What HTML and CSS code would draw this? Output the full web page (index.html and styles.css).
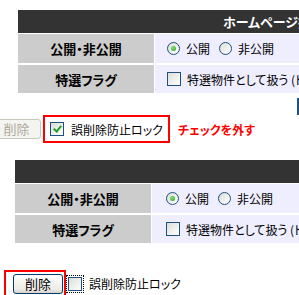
FILE: index.html
```html
<!DOCTYPE html>
<html lang="ja">
<head>
    <meta charset="UTF-8">
    <title>削除ロック</title>
    <link rel="stylesheet" href="styles.css">
</head>
<body>
    <!-- Before: lock is on -->
    <div class="form-table first">
        <div class="head"><span>ホームページ掲載</span></div>
        <div class="row">
            <div class="label">公開・非公開</div>
            <div class="value">
                <span class="radio on"></span><span class="opt">公開</span>
                <span class="radio"></span><span class="opt">非公開</span>
            </div>
        </div>
        <div class="row">
            <div class="label">特選フラグ</div>
            <div class="value">
                <span class="check"></span><span class="opt">特選物件として扱う (トップページに表示)</span>
            </div>
        </div>
    </div>
    <div class="edge-mark"></div>

    <div class="action-row first-actions">
        <button class="btn" disabled>削除</button>
        <div class="highlight lock-box">
            <span class="check checked"></span><span class="lock-text">誤削除防止ロック</span>
        </div>
        <span class="note">チェックを外す</span>
    </div>

    <!-- After: lock is off -->
    <div class="form-table second">
        <div class="head"></div>
        <div class="row">
            <div class="label">公開・非公開</div>
            <div class="value">
                <span class="radio on"></span><span class="opt">公開</span>
                <span class="radio"></span><span class="opt">非公開</span>
            </div>
        </div>
        <div class="row">
            <div class="label">特選フラグ</div>
            <div class="value">
                <span class="check"></span><span class="opt">特選物件として扱う (トップページに表示)</span>
            </div>
        </div>
    </div>

    <div class="action-row second-actions">
        <div class="highlight btn-box">
            <button class="btn">削除</button>
        </div>
        <span class="check focus"></span><span class="lock-text">誤削除防止ロック</span>
    </div>
</body>
</html>
```

FILE: styles.css
```css
/* General */
body {
    margin: 0;
    background: #fff;
    color: #000;
    font-family: "Noto Sans CJK JP", sans-serif;
    font-size: 12px;
    font-feature-settings: "palt";
    overflow: hidden;
    width: 299px;
    height: 295px;
    position: relative;
}

/* Form tables */
.form-table {
    width: 420px;
}

.form-table.first {
    margin: 10px 0 0 18px;
}

.form-table.second {
    margin: 17px 0 0 15px;
}

.head {
    height: 23px;
    background: #333;
    color: #fff;
    font-weight: bold;
    font-size: 13px;
    line-height: 23px;
    padding-left: 205px;
    white-space: nowrap;
}

.row {
    display: flex;
    height: 29px;
    border-top: 1px solid #fff;
}

.row + .row {
    border-top-width: 2px;
    height: 28px;
}

.label {
    width: 136px;
    background: #ccc;
    font-weight: bold;
    font-size: 13px;
    display: flex;
    align-items: center;
    justify-content: center;
}

.value {
    flex: 1;
    margin-left: 1px;
    background: #eef;
    display: flex;
    align-items: center;
    padding-left: 12px;
    white-space: nowrap;
    overflow: hidden;
}

.second .value {
    padding-left: 14px;
}

.opt {
    font-size: 12px;
    margin: 0 9px 0 6px;
}

/* Radio and checkbox look */
.radio {
    width: 11px;
    height: 11px;
    border: 1px solid #1c5180;
    border-radius: 50%;
    background: linear-gradient(135deg, #dcdcd6, #fff);
    position: relative;
    flex: none;
}

.radio.on::after {
    content: "";
    position: absolute;
    left: 3px;
    top: 3px;
    width: 5px;
    height: 5px;
    border-radius: 50%;
    background: radial-gradient(circle at 40% 40%, #8be07f, #21a121);
}

.check {
    width: 12px;
    height: 12px;
    border: 1px solid #1c5180;
    background: linear-gradient(135deg, #dcdcd6, #fff);
    flex: none;
    position: relative;
    display: inline-block;
}

.check.checked::after {
    content: "";
    position: absolute;
    left: 4px;
    top: 1px;
    width: 3px;
    height: 6px;
    border: solid #21a121;
    border-width: 0 2px 2px 0;
    transform: rotate(40deg);
}

.check.focus {
    outline: 1px dotted #000;
    outline-offset: 1px;
}

/* Actions */
.action-row {
    display: flex;
    align-items: center;
}

.first-actions {
    margin-top: 22px;
}

.second-actions {
    margin-top: 27px;
    margin-left: 4px;
}

.btn {
    font-family: "Noto Sans CJK JP", sans-serif;
    font-size: 13px;
    padding: 0;
    height: 20px;
    line-height: 18px;
    border-radius: 3px;
    cursor: pointer;
}

.first-actions .btn {
    width: 49px;
    margin-left: -8px;
    color: #aca899;
    background: #f4f4f0;
    border: 1px solid #c9c7ba;
}

.second-actions .btn {
    width: 50px;
    color: #000;
    background: linear-gradient(#fff, #ecebe6 80%, #d6d0c5);
    border: 1px solid #003c74;
}

.highlight {
    border: 2px solid #f00;
    display: flex;
    align-items: center;
}

.lock-box {
    margin-left: 2px;
    width: 118px;
    height: 24px;
    padding-left: 5px;
    overflow: hidden;
    white-space: nowrap;
}

.btn-box {
    padding: 1px 0 0 7px;
    width: 51px;
    height: 22px;
}

.lock-text {
    font-size: 12px;
    margin-left: 7px;
    white-space: nowrap;
}

.second-actions .check {
    margin-left: 2px;
}

.note {
    color: #f00;
    font-weight: bold;
    font-size: 12px;
    margin-left: 8px;
}

/* Cut-off edge of something outside the frame */
.edge-mark {
    position: absolute;
    right: 0;
    top: 98px;
    width: 2px;
    height: 17px;
    background: #1c5180;
}
```
